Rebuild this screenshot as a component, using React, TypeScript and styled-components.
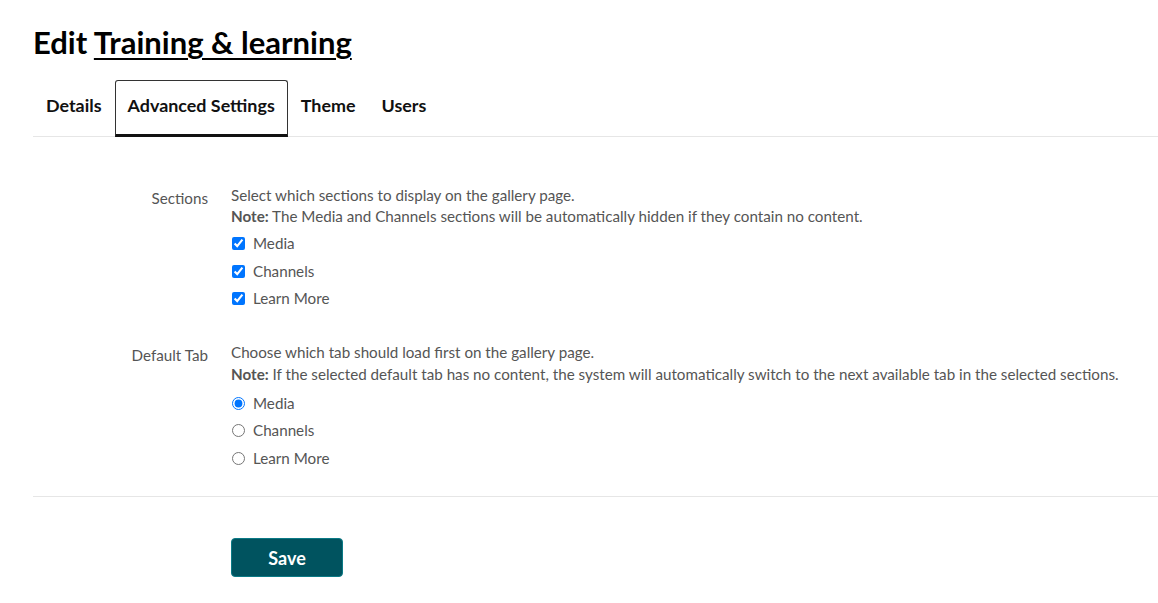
import React, { useState } from 'react';
import styled, { createGlobalStyle } from 'styled-components';

const GlobalStyle = createGlobalStyle`
  body {
    margin: 0;
    background: #fff;
    font-family: Lato, 'Open Sans', sans-serif;
    color: #555;
  }
`;

const Page = styled.div`
  padding: 22px 0 0 33px;
`;

const Title = styled.h1`
  margin: 0 0 18px;
  font-size: 31px;
  line-height: 40px;
  font-weight: 700;
  color: #000;

  a {
    color: inherit;
    text-decoration: underline;
    text-underline-offset: 4px;
    text-decoration-thickness: 2px;
  }
`;

const TabBar = styled.div`
  display: flex;
  border-bottom: 1px solid #e6e6e6;
`;

const Tab = styled.button<{ $active?: boolean }>`
  font-family: inherit;
  font-size: 17.9px;
  font-weight: 700;
  color: #111;
  background: ${({ $active }) => ($active ? '#fff' : 'transparent')};
  height: 57px;
  padding: 0 12px 5px;
  margin-bottom: -1px;
  cursor: pointer;
  border: 1px solid ${({ $active }) => ($active ? '#333' : 'transparent')};
  border-bottom: 3px solid ${({ $active }) => ($active ? '#111' : 'transparent')};
  border-radius: 3px 3px 0 0;
`;

const Form = styled.div`
  padding: 48px 0 0;
`;

const Row = styled.div`
  display: grid;
  grid-template-columns: 175px 1fr;
  column-gap: 23px;
  margin-bottom: 29px;
`;

const Label = styled.div`
  text-align: right;
  font-size: 15.2px;
  line-height: 21px;
  padding-top: 3px;
`;

const Help = styled.p<{ $spaced?: boolean }>`
  margin: ${({ $spaced }) => ($spaced ? '1px 0 0' : '0')};
  font-size: 15.2px;
  line-height: 21px;

  b {
    font-weight: 700;
  }
`;

const Options = styled.div<{ $offset?: number }>`
  display: flex;
  flex-direction: column;
  padding-top: ${({ $offset = 3 }) => $offset}px;
`;

const Option = styled.label`
  display: flex;
  align-items: center;
  gap: 8px;
  font-size: 15.2px;
  line-height: 27.5px;

  input {
    margin: 0 0 0 1px;
    width: 13px;
    height: 13px;
    accent-color: #0075ff;
  }
`;

const Divider = styled.hr`
  border: 0;
  border-top: 1px solid #e6e6e6;
  margin: -5px 0 41px;
`;

const Actions = styled.div`
  padding-left: 198px;
`;

const SaveButton = styled.button`
  font-family: inherit;
  font-size: 18px;
  font-weight: 700;
  color: #fff;
  background: #00535f;
  border: 1px solid #0b7a86;
  border-radius: 4px;
  width: 112px;
  height: 39px;
  cursor: pointer;
`;

const sections = ['Media', 'Channels', 'Learn More'];

export default function App() {
  const [checked, setChecked] = useState<string[]>(sections);
  const [defaultTab, setDefaultTab] = useState('Media');

  const toggle = (name: string) =>
    setChecked((prev) => (prev.includes(name) ? prev.filter((n) => n !== name) : [...prev, name]));

  return (
    <Page>
      <GlobalStyle />
      <Title>
        Edit <a href="#">Training &amp; learning</a>
      </Title>
      <TabBar>
        <Tab>Details</Tab>
        <Tab $active>Advanced Settings</Tab>
        <Tab>Theme</Tab>
        <Tab>Users</Tab>
      </TabBar>
      <Form>
        <Row>
          <Label>Sections</Label>
          <div>
            <Help>Select which sections to display on the gallery page.</Help>
            <Help>
              <b>Note:</b> The Media and Channels sections will be automatically hidden if they contain no content.
            </Help>
            <Options>
              {sections.map((s) => (
                <Option key={s}>
                  <input type="checkbox" checked={checked.includes(s)} onChange={() => toggle(s)} />
                  {s}
                </Option>
              ))}
            </Options>
          </div>
        </Row>
        <Row>
          <Label>Default Tab</Label>
          <div>
            <Help>Choose which tab should load first on the gallery page.</Help>
            <Help $spaced>
              <b>Note:</b> If the selected default tab has no content, the system will automatically switch to the next
              available tab in the selected sections.
            </Help>
            <Options $offset={5}>
              {sections.map((s) => (
                <Option key={s}>
                  <input type="radio" name="defaultTab" checked={defaultTab === s} onChange={() => setDefaultTab(s)} />
                  {s}
                </Option>
              ))}
            </Options>
          </div>
        </Row>
        <Divider />
        <Actions>
          <SaveButton>Save</SaveButton>
        </Actions>
      </Form>
    </Page>
  );
}
